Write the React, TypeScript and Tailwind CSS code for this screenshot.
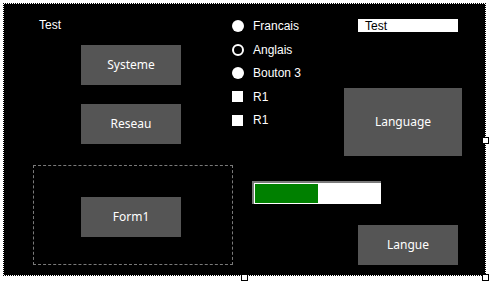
import React from "react"

const label = "font-['Liberation_Sans',Arial,sans-serif] text-[12px] text-white leading-none"
const btn =
  "flex items-center justify-center bg-[#555555] text-[12px] text-white font-['Noto_Sans','Open_Sans',sans-serif]"

function Radio({ text, checked }: { text: string; checked: boolean }) {
  return (
    <div className="flex items-center gap-[9px] h-[12px]">
      {checked ? (
        <span className="w-[12px] h-[12px] rounded-full bg-white" />
      ) : (
        <span className="w-[12px] h-[12px] rounded-full border-2 border-white" />
      )}
      <span className={label}>{text}</span>
    </div>
  )
}

function Check() {
  return (
    <div className="flex items-center gap-[10px] h-[12px]">
      <span className="w-[11px] h-[11px] bg-white" />
      <span className={label}>R1</span>
    </div>
  )
}

export default function App() {
  return (
    <div className="relative w-[491px] h-[283px] bg-white overflow-hidden p-[3px]">
      {/* form surface */}
      <div className="w-[483px] h-[273px] border border-dotted border-black">
        <div className="w-full h-full bg-black flex pl-[29px] pt-[15px]">
          {/* left column */}
          <div className="w-[200px] flex flex-col">
            <span className={`ml-[6px] h-[12px] ${label}`}>Test</span>
            <div className="flex flex-col gap-[19px] mt-[14px] pl-[48px]">
              <div className={`${btn} w-[100px] h-[40px]`}>Systeme</div>
              <div className={`${btn} w-[100px] h-[40px]`}>Reseau</div>
            </div>
            {/* group box */}
            <div className="mt-[21px] w-[200px] h-[100px] border border-dashed border-[#7a7a7a] pt-[31px] pl-[47px]">
              <div className={`${btn} w-[100px] h-[40px]`}>Form1</div>
            </div>
          </div>

          {/* middle column */}
          <div className="ml-[-1px] w-[150px] flex flex-col pt-[1px]">
            <div className="flex flex-col gap-[11.5px]">
              <Radio text="Francais" checked />
              <Radio text="Anglais" checked={false} />
              <Radio text="Bouton 3" checked />
              <Check />
              <Check />
            </div>
            {/* progress bar */}
            <div className="mt-[55px] ml-[20px] w-[129px] h-[23px] bg-white border-t-2 border-l-2 border-[#7a7a7a] p-px">
              <div className="w-[63px] h-full bg-[#008000]" />
            </div>
          </div>

          {/* right column */}
          <div className="ml-[-38px] w-[118px] flex flex-col">
            <div className="ml-[14px] w-[100px] h-[13px] bg-white flex items-center pl-[7px]">
              <span className="font-['Liberation_Sans',Arial,sans-serif] text-[12px] text-black leading-none">Test</span>
            </div>
            <div className={`${btn} mt-[56px] w-[118px] h-[68px]`}>Language</div>
            <div className={`${btn} mt-[69px] ml-[14px] w-[100px] h-[40px]`}>Langue</div>
          </div>
        </div>
      </div>

      {/* grab handles */}
      <div className="absolute left-[482px] top-[137px] w-[7px] h-[7px] bg-white border border-black" />
      <div className="absolute left-[241px] top-[274px] w-[7px] h-[7px] bg-white border border-black" />
      <div className="absolute left-[482px] top-[274px] w-[7px] h-[7px] bg-white border border-black" />
    </div>
  )
}
